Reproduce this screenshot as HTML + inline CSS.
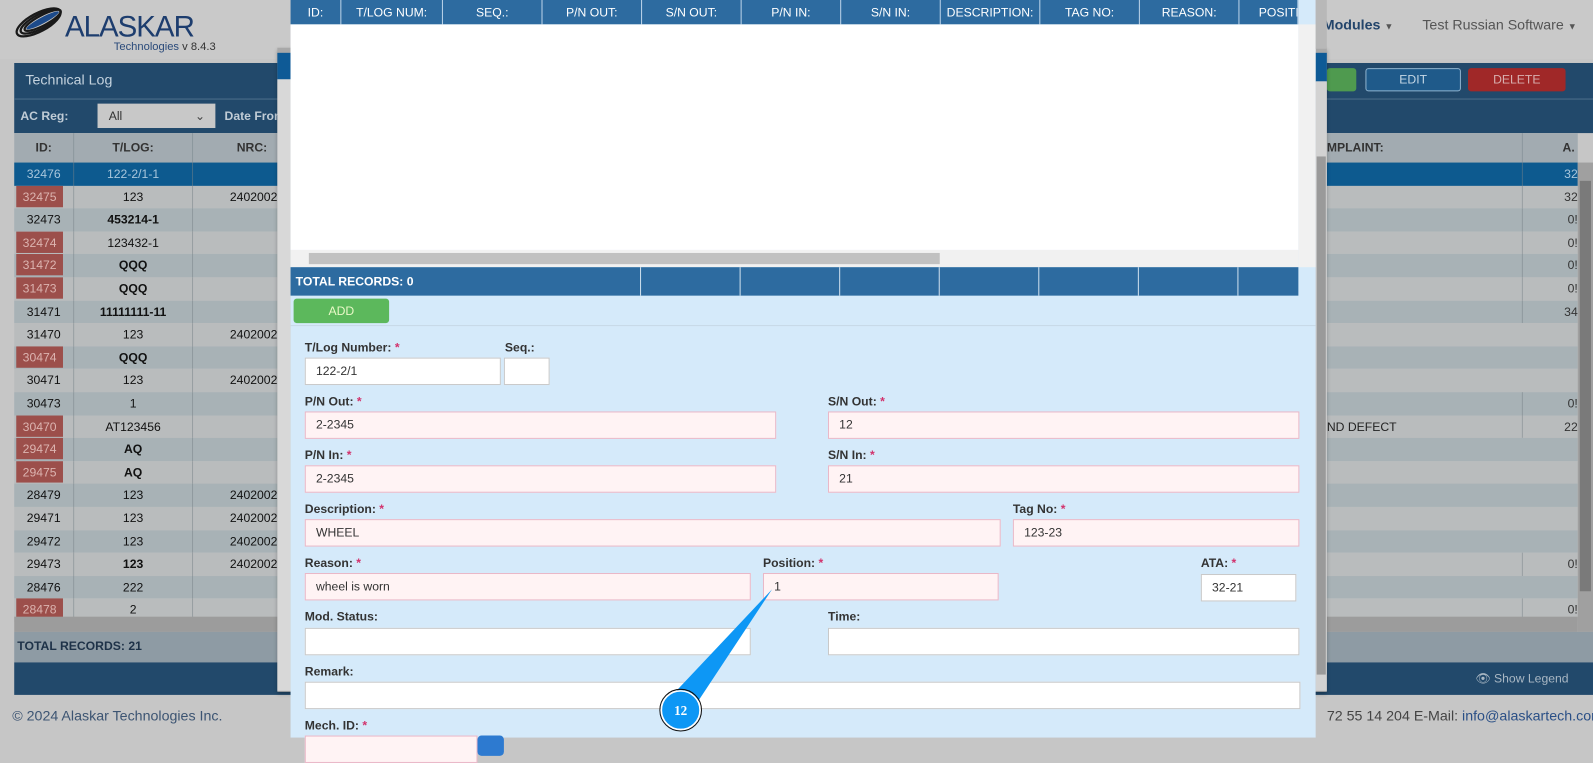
<!DOCTYPE html>
<html><head><meta charset="utf-8"><style>
*{box-sizing:border-box;margin:0;padding:0}
body{width:1593px;height:737px;overflow:hidden;background:#c6c6c6;font-family:"Liberation Sans",Arial,sans-serif;position:relative;font-size:12px}
#wrap{position:absolute;left:0;top:0;width:1568px;height:726px;transform:scale(1.01594);transform-origin:0 0}
.abs{position:absolute;white-space:nowrap}
.row{position:absolute;left:14px;width:1539px;height:22.6px}
.row span{position:absolute;top:0;line-height:22.6px;text-align:center;color:#111}
.tf{position:absolute;font-size:12px;font-weight:bold;color:#333}
.tf i{color:#d2326c;font-style:normal}
.in{position:absolute;height:27px;border:1px solid #c9c9c9;background:#fff;font-size:12px;color:#333;line-height:25px;padding-left:10px}
.pk{background:#fff3f4;border-color:#e9b8c8}
.hd{position:absolute;top:0;height:24px;line-height:24px;color:#fff;font-size:12px;text-align:center;border-right:1px solid #bcd4ea}
</style></head><body><div id="wrap">
<div class="abs" style="left:0;top:0;width:1568px;height:58px;background:#c9c9c9"></div>
<svg class="abs" style="left:12px;top:4px" width="60" height="36" viewBox="0 0 60 36"><g fill="none" stroke="#1a1a1a" stroke-width="2.2"><ellipse cx="26" cy="18" rx="24" ry="9" transform="rotate(-28 26 18)"/><ellipse cx="28" cy="17" rx="22" ry="7" transform="rotate(-28 28 17)"/><ellipse cx="30" cy="16" rx="20" ry="5" transform="rotate(-28 30 16)"/></g><ellipse cx="30" cy="16" rx="18" ry="3" transform="rotate(-28 30 16)" fill="#1c4a8a"/></svg>
<div class="abs" style="left:64px;top:11px;font-size:29px;color:#1d3d6e;letter-spacing:-1px">ALASKAR</div>
<div class="abs" style="left:112px;top:40px;font-size:11px;color:#2a4a7a">Technologies <span style="color:#333">v 8.4.3</span></div>
<div class="abs" style="left:1302px;top:16px;font-size:14px;font-weight:bold;color:#23456b">Modules <span style="font-size:9px;color:#555">▼</span></div>
<div class="abs" style="left:1400px;top:16px;font-size:14px;color:#555">Test Russian Software <span style="font-size:9px">▼</span></div>
<div class="abs" style="left:14px;top:62px;width:1554px;height:35px;background:#22496b"></div>
<div class="abs" style="left:25px;top:70px;font-size:14px;color:#c4d2de">Technical Log</div>
<div class="abs" style="left:1344px;top:67px;width:94px;height:23px;border:1px solid #8fb3cf;border-radius:3px;background:#1f5a8a;color:#c6d8e6;text-align:center;line-height:21px">EDIT</div>
<div class="abs" style="left:1445px;top:67px;width:96px;height:23px;border-radius:3px;background:#a02828;color:#d8b0b0;text-align:center;line-height:23px">DELETE</div>
<div class="abs" style="left:1306px;top:67px;width:29px;height:23px;border-radius:3px;background:#4f9a4f"></div>
<div class="abs" style="left:14px;top:97px;width:1554px;height:34px;background:#22496b;border-top:1px solid #4c6e8a"></div>
<div class="abs" style="left:20px;top:107px;font-weight:bold;color:#c0ccd6">AC Reg:</div>
<div class="abs" style="left:96px;top:102px;width:116px;height:24px;background:#c8c8c8;color:#333;padding-left:11px;line-height:24px">All<span style="position:absolute;right:10px;color:#444">⌄</span></div>
<div class="abs" style="left:221px;top:107px;font-weight:bold;color:#c0ccd6">Date From</div>
<div class="abs" style="left:14px;top:131px;width:1539px;height:29px;background:#a2abb1"></div>
<div class="abs" style="left:14px;top:138px;width:58px;text-align:center;font-weight:bold;color:#333">ID:</div>
<div class="abs" style="left:72px;top:131px;width:118px;height:29px;border-left:1px solid #8c979e;border-right:1px solid #8c979e;text-align:center;line-height:29px;font-weight:bold;color:#333">T/LOG:</div>
<div class="abs" style="left:190px;top:138px;width:73px;text-align:right;font-weight:bold;color:#333">NRC:</div>
<div class="abs" style="left:1306px;top:138px;font-weight:bold;color:#333">MPLAINT:</div>
<div class="abs" style="left:1498px;top:131px;height:29px;border-left:1px solid #8c979e;width:1px"></div>
<div class="abs" style="left:1538px;top:138px;font-weight:bold;color:#333">A.</div>
<div id="rows"></div>
<div class="abs" style="left:14px;top:607px;width:1539px;height:15px;background:#9c9c9c"></div>
<div class="abs" style="left:1553px;top:160px;width:15px;height:462px;background:#a0a0a0"></div>
<div class="abs" style="left:1555px;top:178px;width:11px;height:404px;background:#7a7a7a"></div>
<div class="abs" style="left:14px;top:622px;width:1554px;height:30px;background:#8e9ba4"></div>
<div class="abs" style="left:17px;top:629px;font-weight:bold;color:#1e3248">TOTAL RECORDS: 21</div>
<div class="abs" style="left:14px;top:652px;width:1554px;height:32px;background:#22496b"></div>
<div class="abs" style="left:1452px;top:661px;color:#aab8c4;font-size:12px">👁 Show Legend</div>
<div class="abs" style="left:12px;top:696px;font-size:14px;color:#3c5472">© 2024 Alaskar Technologies Inc.</div>
<div class="abs" style="left:1306px;top:696px;font-size:14px;color:#444">72 55 14 204 E-Mail: <span style="color:#2a4f86">info@alaskartech.com</span></div>
<div class="abs" style="left:273px;top:47px;width:1033px;height:634px;background:#a8a8a8;box-shadow:0 2px 4px rgba(0,0,0,.3)"></div>
<div class="abs" style="left:273px;top:52px;width:1033px;height:29px;background:#0e5a96"></div>
<div class="abs" style="left:273px;top:78px;width:13px;height:602px;background:#d8d8d8"></div>
<div class="abs" style="left:1295px;top:80px;width:11px;height:600px;background:#d2d2d2"></div>
<div class="abs" style="left:1296px;top:154px;width:9px;height:510px;background:#9a9a9a"></div>
<div class="abs" style="left:286px;top:0;width:1009px;height:726px;background:#d5eafa"></div>
<div class="abs" style="left:286px;top:0;width:992px;height:24px;background:#2d6ba0"></div>
<div class="hd" style="left:286px;width:50px">ID:</div>
<div class="hd" style="left:336px;width:100px">T/LOG NUM:</div>
<div class="hd" style="left:436px;width:98px">SEQ.:</div>
<div class="hd" style="left:534px;width:98px">P/N OUT:</div>
<div class="hd" style="left:632px;width:98px">S/N OUT:</div>
<div class="hd" style="left:730px;width:98px">P/N IN:</div>
<div class="hd" style="left:828px;width:98px">S/N IN:</div>
<div class="hd" style="left:926px;width:98px">DESCRIPTION:</div>
<div class="hd" style="left:1024px;width:98px">TAG NO:</div>
<div class="hd" style="left:1122px;width:98px">REASON:</div>
<div class="hd" style="left:1220px;width:58px;text-align:left;padding-left:19px;overflow:hidden">POSITI</div>
<div class="abs" style="left:286px;top:24px;width:992px;height:222px;background:#fff"></div>
<div class="abs" style="left:1278px;top:24px;width:17px;height:239px;background:#f1f1f1"></div>
<div class="abs" style="left:286px;top:246px;width:992px;height:17px;background:#f1f1f1"></div>
<div class="abs" style="left:304px;top:249px;width:621px;height:11px;background:#c1c1c1"></div>
<div class="abs" style="left:286px;top:263px;width:992px;height:28px;background:#2d6ba0"></div>
<div class="abs" style="left:291px;top:270px;color:#fff;font-weight:bold">TOTAL RECORDS: 0</div>
<div class="abs" style="left:630px;top:263px;width:1px;height:28px;background:#cfe0ee;box-shadow:98px 0 #cfe0ee,196px 0 #cfe0ee,294px 0 #cfe0ee,392px 0 #cfe0ee,490px 0 #cfe0ee,588px 0 #cfe0ee"></div>
<div class="abs" style="left:289px;top:294px;width:94px;height:24px;background:#5cb85c;border-radius:3px;color:#eaf9c8;text-align:center;line-height:24px">ADD</div>
<div class="abs" style="left:286px;top:320px;width:1009px;height:1px;background:#c6d8e6"></div>
<div class="tf" style="left:300px;top:335px">T/Log Number: <i>*</i></div>
<div class="in" style="left:300px;top:352px;width:193px">122-2/1</div>
<div class="tf" style="left:497px;top:335px">Seq.:</div>
<div class="in" style="left:496px;top:352px;width:45px"></div>
<div class="tf" style="left:300px;top:388px">P/N Out: <i>*</i></div>
<div class="in pk" style="left:300px;top:405px;width:464px">2-2345</div>
<div class="tf" style="left:815px;top:388px">S/N Out: <i>*</i></div>
<div class="in pk" style="left:815px;top:405px;width:464px">12</div>
<div class="tf" style="left:300px;top:441px">P/N In: <i>*</i></div>
<div class="in pk" style="left:300px;top:458px;width:464px">2-2345</div>
<div class="tf" style="left:815px;top:441px">S/N In: <i>*</i></div>
<div class="in pk" style="left:815px;top:458px;width:464px">21</div>
<div class="tf" style="left:300px;top:494px">Description: <i>*</i></div>
<div class="in pk" style="left:300px;top:511px;width:685px">WHEEL</div>
<div class="tf" style="left:997px;top:494px">Tag No: <i>*</i></div>
<div class="in pk" style="left:997px;top:511px;width:282px">123-23</div>
<div class="tf" style="left:300px;top:547px">Reason: <i>*</i></div>
<div class="in pk" style="left:300px;top:564px;width:439px">wheel is worn</div>
<div class="tf" style="left:751px;top:547px">Position: <i>*</i></div>
<div class="in pk" style="left:751px;top:564px;width:232px">1</div>
<div class="tf" style="left:1182px;top:547px">ATA: <i>*</i></div>
<div class="in" style="left:1182px;top:565px;width:94px">32-21</div>
<div class="tf" style="left:300px;top:600px">Mod. Status:</div>
<div class="in" style="left:300px;top:618px;width:439px"></div>
<div class="tf" style="left:815px;top:600px">Time:</div>
<div class="in" style="left:815px;top:618px;width:464px"></div>
<div class="tf" style="left:300px;top:654px">Remark:</div>
<div class="in" style="left:300px;top:671px;width:980px"></div>
<div class="tf" style="left:300px;top:707px">Mech. ID: <i>*</i></div>
<div class="in pk" style="left:300px;top:724px;width:170px"></div>
<div class="abs" style="left:470px;top:724px;width:26px;height:20px;background:#2d7ad0;border-radius:4px"></div>
<svg class="abs" style="left:640px;top:570px" width="140" height="150"><polygon points="120,10 22,114 42,128" fill="#0d97f5"/><circle cx="30" cy="129" r="19" fill="#0d97f5" stroke="#fff" stroke-width="1.5"/><circle cx="30" cy="129" r="20.5" fill="none" stroke="#111" stroke-width="1"/><text x="30" y="134" text-anchor="middle" font-family="Liberation Serif,serif" font-weight="bold" font-size="13" fill="#fff">12</text></svg>
<div class="abs" style="left:1295px;top:0;width:11px;height:48px;background:#b8b8b8"></div>
</div>
<script>
var d=[["32476","122-2/1-1","",0,0,"32"],["32475","123","2402002",1,0,"32"],["32473","453214-1","",0,1,"0!"],["32474","123432-1","",1,0,"0!"],["31472","QQQ","",1,1,"0!"],["31473","QQQ","",1,1,"0!"],["31471","11111111-11","",0,1,"34"],["31470","123","2402002",0,0,""],["30474","QQQ","",1,1,""],["30471","123","2402002",0,0,""],["30473","1","",0,0,"0!"],["30470","AT123456","",1,0,"22"],["29474","AQ","",1,1,""],["29475","AQ","",1,1,""],["28479","123","2402002",0,0,""],["29471","123","2402002",0,0,""],["29472","123","2402002",0,0,""],["29473","123","2402002",0,1,"0!"],["28476","222","",0,0,""],["28478","2","",1,0,"0!"]];
var h="";d.forEach(function(r,i){var y=160+i*22.6;var bg=i==0?"#0d5a8f":(i%2?"#b9bcbd":"#a8b2b6");var c=i==0?"#a8c6dc":"#111";
h+='<div class="row" style="top:'+y+'px;background:'+bg+'">';
if(r[3])h+='<span style="left:2px;width:46px;height:21px;background:#9c4f4b;color:#dcb4b0">'+r[0]+'</span>';else h+='<span style="left:0;width:58px;color:'+c+'">'+r[0]+'</span>';
h+='<span style="left:58px;width:118px;border-left:1px solid rgba(120,130,136,.5);border-right:1px solid rgba(120,130,136,.5);color:'+c+';'+(r[4]?'font-weight:bold':'')+'">'+r[1]+'</span>';
h+='<span style="left:176px;width:83px;text-align:right;color:'+c+'">'+r[2]+'</span>';
h+='<span style="left:1484px;width:55px;border-left:1px solid rgba(120,130,136,.5);text-align:right;color:'+(i==0?"#a8c6dc":"#333")+'">'+r[5]+'</span>';
if(i==11)h+='<span style="left:1292px;color:#222">ND DEFECT</span>';
h+='</div>';});
document.getElementById("rows").innerHTML=h;
</script>
</body></html>
